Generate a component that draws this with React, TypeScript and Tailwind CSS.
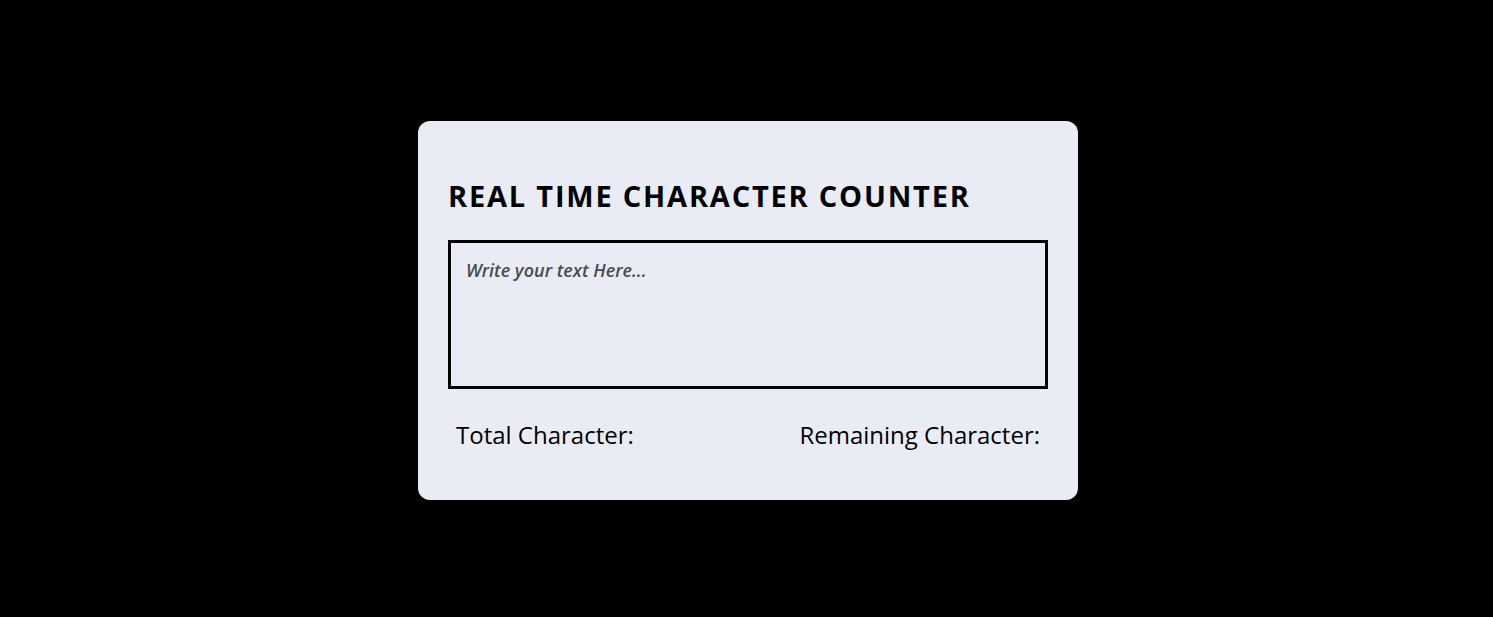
import React from "react";

export default function App() {
  return (
    <div className="w-full h-[617px] bg-black flex items-center justify-center" style={{ fontFamily: '"Open Sans", "Noto Sans", sans-serif' }}>
      <div className="w-[660px] h-[379px] bg-[#e9ecf4] rounded-[12px] px-[30px] pt-[55px] mt-[3px] ml-[3px]">
        <h1 className="text-[29px] font-bold leading-[40px] tracking-[1.8px] text-black">REAL TIME CHARACTER COUNTER</h1>
        <textarea
          className="mt-[24px] w-[600px] h-[149px] border-[3px] border-black bg-transparent px-[15px] py-[14px] resize-none outline-none text-[18px] italic placeholder:text-[#4a4a50] placeholder:font-semibold block"
          placeholder="Write your text Here..."
        />
        <div className="flex justify-between px-[8px] mt-[30px] text-[24px] leading-[32px] text-black">
          <span>Total Character:</span>
          <span>Remaining Character:</span>
        </div>
      </div>
    </div>
  );
}
